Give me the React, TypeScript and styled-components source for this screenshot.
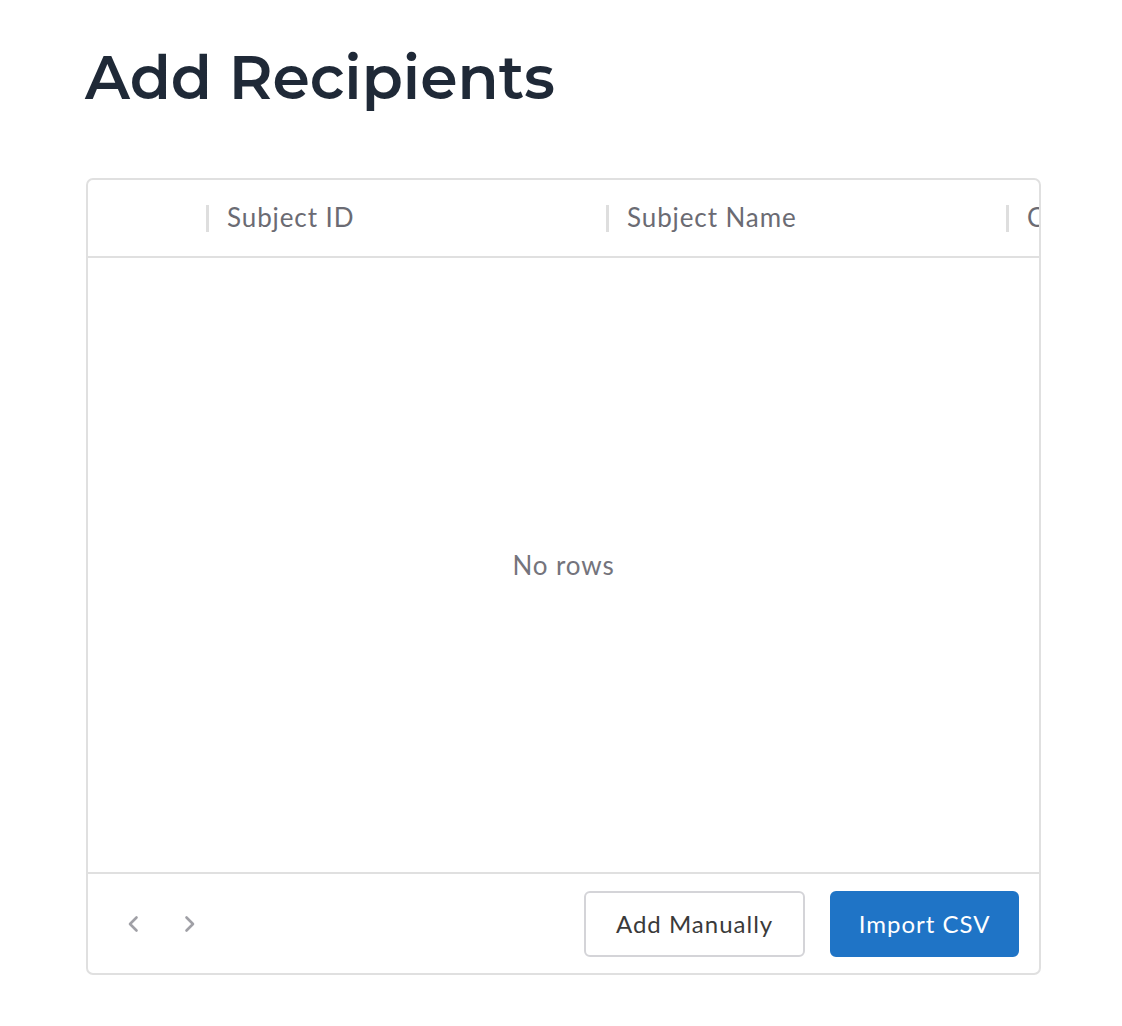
import React from "react";
import styled, { createGlobalStyle } from "styled-components";

const Global = createGlobalStyle`
  html, body { margin: 0; padding: 0; background: #ffffff; }
  body { font-family: "Lato", "Open Sans", sans-serif; }
`;

const Page = styled.div`
  padding: 37px 0 0 86px;
  width: 955px;
`;

const Title = styled.h1`
  margin: 0 0 59px -1px;
  font-family: "Montserrat", "Open Sans", sans-serif;
  font-weight: 600;
  font-size: 60px;
  line-height: 82px;
  color: #1f2937;
  letter-spacing: 0;
`;

const Card = styled.div`
  width: 955px;
  height: 797px;
  box-sizing: border-box;
  border: 2px solid #e0e0e0;
  border-radius: 7px;
  display: flex;
  flex-direction: column;
  overflow: hidden;
`;

const HeaderRow = styled.div`
  height: 76px;
  flex: none;
  display: flex;
  align-items: center;
  border-bottom: 2px solid #e0e0e0;
  overflow: hidden;
`;

const HeaderCell = styled.div<{ $w: number }>`
  flex: none;
  width: ${(p) => p.$w}px;
  height: 100%;
  display: flex;
  align-items: center;
  box-sizing: border-box;
  white-space: nowrap;
  overflow: hidden;
`;

const Sep = styled.span`
  width: 3px;
  height: 27px;
  background: #dedede;
  margin-right: 18px;
  flex: none;
`;

const HeaderText = styled.span`
  font-size: 26px;
  letter-spacing: 0.9px;
  color: #6b6b73;
  font-family: "Lato", "Open Sans", sans-serif;
  margin-top: -2px;
`;

const Body = styled.div`
  flex: 1;
  display: flex;
  align-items: center;
  justify-content: center;
`;

const Empty = styled.span`
  font-size: 26px;
  letter-spacing: 0.9px;
  color: #74747c;
  font-family: "Lato", "Open Sans", sans-serif;
  margin-top: -1px;
`;

const Footer = styled.div`
  height: 99px;
  flex: none;
  border-top: 2px solid #e0e0e0;
  display: flex;
  align-items: center;
  padding: 0 20px 0 35px;
`;

const Pager = styled.div`
  display: flex;
  align-items: center;
  gap: 37px;
  flex: 1;
`;

const PageBtn = styled.span`
  display: flex;
  width: 20px;
  height: 20px;
  align-items: center;
  justify-content: center;
`;

const Actions = styled.div`
  display: flex;
  gap: 25px;
  align-items: center;
`;

const Button = styled.button<{ $primary?: boolean }>`
  height: 66px;
  box-sizing: border-box;
  padding: 0 ${(p) => (p.$primary ? 26.5 : 30)}px;
  border-radius: 6px;
  font-family: "Lato", "Open Sans", sans-serif;
  font-size: 24px;
  letter-spacing: 1px;
  cursor: pointer;
  border: 2px solid ${(p) => (p.$primary ? "#1f74c6" : "#d4d4d8")};
  background: ${(p) => (p.$primary ? "#1f74c6" : "#ffffff")};
  color: ${(p) => (p.$primary ? "#ffffff" : "#3a3a3a")};
`;

const Chevron = ({ dir }: { dir: "left" | "right" }) => (
  <svg width="14" height="18" viewBox="0 0 14 18" fill="none">
    <path
      d={dir === "left" ? "M10.5 2.5 L4 9 L10.5 15.5" : "M3.5 2.5 L10 9 L3.5 15.5"}
      stroke="#a0a0a6"
      strokeWidth="2.6"
      strokeLinecap="round"
      strokeLinejoin="round"
    />
  </svg>
);

export default function App() {
  return (
    <>
      <Global />
      <Page>
        <Title>Add Recipients</Title>
        <Card>
          <HeaderRow>
            <HeaderCell $w={118} />
            <HeaderCell $w={400}>
              <Sep />
              <HeaderText>Subject ID</HeaderText>
            </HeaderCell>
            <HeaderCell $w={400}>
              <Sep />
              <HeaderText>Subject Name</HeaderText>
            </HeaderCell>
            <HeaderCell $w={33}>
              <Sep />
              <HeaderText>Class</HeaderText>
            </HeaderCell>
          </HeaderRow>
          <Body>
            <Empty>No rows</Empty>
          </Body>
          <Footer>
            <Pager>
              <PageBtn>
                <Chevron dir="left" />
              </PageBtn>
              <PageBtn>
                <Chevron dir="right" />
              </PageBtn>
            </Pager>
            <Actions>
              <Button>Add Manually</Button>
              <Button $primary>Import CSV</Button>
            </Actions>
          </Footer>
        </Card>
      </Page>
    </>
  );
}
